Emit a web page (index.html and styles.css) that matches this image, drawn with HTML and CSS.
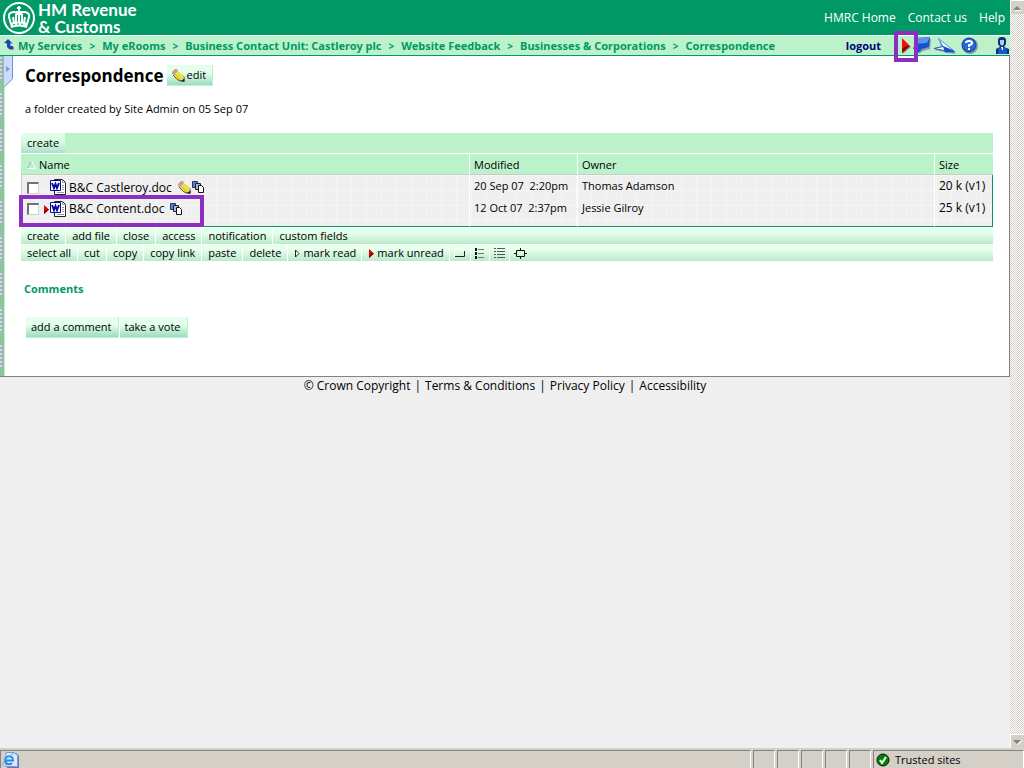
FILE: index.html
```html
<!DOCTYPE html>
<html lang="en">
<head>
    <meta charset="UTF-8">
    <meta name="viewport" content="width=device-width, initial-scale=1.0">
    <title>Correspondence</title>
    <link rel="stylesheet" href="styles.css">
</head>
<body>
    <!-- Shared icons -->
    <svg class="sprite" aria-hidden="true">
        <symbol id="pencil" viewBox="0 0 13 13">
            <path d="M5 2L13 8V13H8L2 8Z" fill="#777" opacity=".6"/>
            <path d="M1 4L4 1L11 6L12 12L6 11L1 6Z" fill="#ece04a"/>
            <path d="M1 6L6 11L12 12" fill="none" stroke="#6a6214"/>
            <path d="M0 3L3 0H5L6 2L2 6L0 5Z" fill="#c99aa0"/>
            <path d="M3 5L8 10" stroke="#c9bb22"/>
            <path d="M9 12.500L12.500 9V12.500Z" fill="#222"/>
        </symbol>
        <symbol id="versions" viewBox="0 0 12 12">
            <path d="M.5 .5H5.500V6.500H.5Z" fill="#5c83cc" stroke="#223660"/>
            <path d="M3.500 2.500H8.500V8.500H3.500Z" fill="#9cbbe9" stroke="#222"/>
            <path d="M6.500 4.500H9.500L11.500 6.500V11.500H6.500Z" fill="#fff" stroke="#111"/>
        </symbol>
        <symbol id="word" viewBox="0 0 17 17">
            <path d="M4.500 .5H12.500L15.500 3.500V15.500H4.500Z" fill="#fff" stroke="#222"/>
            <path d="M12.500 .5V3.500H15.500M12 6.500H14M12 8.500H14M7 13.500H14M12 10.500H14" fill="none" stroke="#999"/>
            <path d="M.5 1.500H10.500V11.500H.5Z" fill="#fff" stroke="#0a0a9c"/>
            <path d="M2 4L4 9L5.500 5L7 9L9 4" fill="none" stroke="#0a0a9c" stroke-width="2"/>
        </symbol>
        <symbol id="flag" viewBox="0 0 5 9">
            <path d="M0 0L5 4.500L0 9Z" fill="#e00000"/>
            <path d="M0 9L5 4.500H3L0 7Z" fill="#700"/>
        </symbol>
    </svg>

    <div class="window">
        <div class="page">
            <header class="banner">
                <a href="#" class="logo">
                    <svg width="34" height="34" viewBox="0 0 34 34">
                        <circle cx="17" cy="17" r="15" fill="none" stroke="#fff" stroke-width="2"/>
                        <path d="M9 23L7 16C6 11 14 9 16 14M25 23L27 16C28 11 20 9 18 14M12 22L11 16M22 22L23 16M17 12V22M14 13V22M20 13V22" fill="none" stroke="#fff" stroke-width="2"/>
                        <path d="M15 7H19M17 5V12M14 11H20" stroke="#fff" stroke-width="2"/>
                        <path d="M8 22Q17 19 26 22L25 27Q17 24 9 27Z" fill="#fff"/>
                        <path d="M11 24Q17 22 23 24" fill="none" stroke="#009966" stroke-dasharray="2 2"/>
                    </svg>
                    <span class="logo-text"><span>HM Revenue</span><span>&amp; Customs</span></span>
                </a>
                <nav class="banner-links">
                    <a href="#">HMRC Home</a>
                    <a href="#">Contact us</a>
                    <a href="#">Help</a>
                </nav>
            </header>

            <nav class="crumbs">
                <a href="#" aria-label="Up">
                    <svg width="10" height="14" viewBox="0 0 10 14"><path d="M5 1L9 5H7V8H10V11H6L5 9V5H1Z" fill="#8c9cb0"/><path d="M4 0L8 4H6V7H9V10H5L3 8V4H0Z" fill="#1c46b8"/></svg>
                </a>
                <ol>
                    <li><a href="#">My Services</a></li>
                    <li><a href="#">My eRooms</a></li>
                    <li><a href="#">Business Contact Unit: Castleroy plc</a></li>
                    <li><a href="#">Website Feedback</a></li>
                    <li><a href="#">Businesses &amp; Corporations</a></li>
                    <li><a href="#">Correspondence</a></li>
                </ol>
                <a href="#" class="logout">logout</a>
                <div class="tools">
                    <a href="#" class="tool-flag" aria-label="Unread">
                        <svg width="10" height="16" viewBox="0 0 10 16">
                            <path d="M2 2L10 9L2 16Z" fill="#7da58a"/>
                            <path d="M1 0L9 8L1 15Z" fill="#f01010"/>
                            <path d="M1 15L9 8H5L1 11Z" fill="#9c0000"/>
                        </svg>
                    </a>
                    <a href="#" class="tool-note" aria-label="Messages">
                        <svg width="18" height="17" viewBox="0 0 18 17">
                            <path d="M6 2H18L17 12L10 14L6 17V14H2Z" fill="#8c9cb0"/>
                            <path d="M4 1L17 0L16 10L9 12L5 16V12H0Z" fill="#1552cc"/>
                            <path d="M4 1L17 0L14 6L1 7Z" fill="#5c95ee"/>
                        </svg>
                    </a>
                    <a href="#" aria-label="Send">
                        <svg width="23" height="16" viewBox="0 0 23 16">
                            <path d="M6 2L23 14L21 16L2 12L8 9Z" fill="#8c9cb0"/>
                            <path d="M5.500 .5L21 13L10 8.500Z" fill="#fff" stroke="#4f86e0"/>
                            <path d="M1 10.500L10 8.500L21 13.500L11 12.500Z" fill="#fff" stroke="#2158c5"/>
                            <path d="M10 8.500L22 14L12 14.500Z" fill="#1c4cc4"/>
                        </svg>
                    </a>
                    <a href="#" aria-label="Help">
                        <svg width="17" height="17" viewBox="0 0 17 17">
                            <circle cx="9" cy="9" r="8" fill="#8c9cb0"/>
                            <circle cx="8" cy="8" r="7" fill="#2767d8" stroke="#123d9c"/>
                            <path d="M5 6Q5 4 8 4Q11 4 11 6Q11 8 8 8V10M8 11V13" fill="none" stroke="#fff" stroke-width="2"/>
                        </svg>
                    </a>
                    <a href="#" class="tool-user" aria-label="Members">
                        <svg width="14" height="17" viewBox="0 0 14 17">
                            <path d="M3 3Q3 0 7 0Q11 0 11 3V7L9 10L14 12V17H1V12L5 10L3 7Z" fill="#122d78"/>
                            <path d="M5 3H9V7L7 9L5 7Z" fill="#a9cdf5"/>
                            <path d="M5 10L7 13L9 10L12 12V17H3V12Z" fill="#1c55cc"/>
                            <path d="M6 10H8V13H7Z" fill="#fff"/>
                        </svg>
                    </a>
                </div>
            </nav>

            <div class="content">
                <div class="rail">
                    <button class="rail-tab" aria-label="Show sidebar">
                        <svg width="9" height="32" viewBox="0 0 9 32">
                            <path d="M0 0H8.500V23L0 31Z" fill="#ccdcff"/>
                            <path d="M8.500 0V23L0 31" fill="none" stroke="#6f93d2"/>
                            <path d="M2 10L6 13L2 16Z" fill="#7c9be0"/>
                        </svg>
                    </button>
                </div>
                <main>
                    <div class="heading">
                        <h1>Correspondence</h1>
                        <button class="btn"><svg width="13" height="13"><use href="#pencil"/></svg>edit</button>
                    </div>
                    <p class="about">a folder created by Site Admin on 05 Sep 07</p>

                    <div class="create-bar"><button>create</button></div>
                    <table class="files">
                        <colgroup>
                            <col>
                            <col class="col-modified">
                            <col class="col-owner">
                            <col class="col-size">
                        </colgroup>
                        <thead>
                            <tr>
                                <th class="sorted"><svg width="9" height="9" viewBox="0 0 9 9"><path d="M.5 8.500L4.500 .5" stroke="#9ab9a4"/><path d="M4.500 .5L8.500 8.500H.5" fill="none" stroke="#fff"/></svg>Name</th>
                                <th>Modified</th>
                                <th>Owner</th>
                                <th>Size</th>
                            </tr>
                        </thead>
                        <tbody>
                            <tr>
                                <td>
                                    <div class="file">
                                        <input type="checkbox" aria-label="Select B&amp;C Castleroy.doc">
                                        <span class="mark"></span>
                                        <svg width="17" height="17"><use href="#word"/></svg>
                                        <a href="#">B&amp;C Castleroy.doc</a>
                                        <span class="file-icons"><svg width="13" height="13"><use href="#pencil"/></svg><svg width="12" height="12"><use href="#versions"/></svg></span>
                                    </div>
                                </td>
                                <td class="meta">20 Sep 07&nbsp; 2:20pm</td>
                                <td class="meta">Thomas Adamson</td>
                                <td>20 k (v1)</td>
                            </tr>
                            <tr>
                                <td>
                                    <div class="file marked">
                                        <input type="checkbox" aria-label="Select B&amp;C Content.doc">
                                        <span class="mark"><svg width="5" height="9"><use href="#flag"/></svg></span>
                                        <svg width="17" height="17"><use href="#word"/></svg>
                                        <a href="#">B&amp;C Content.doc</a>
                                        <span class="file-icons"><svg width="12" height="12"><use href="#versions"/></svg></span>
                                    </div>
                                </td>
                                <td class="meta">12 Oct 07&nbsp; 2:37pm</td>
                                <td class="meta">Jessie Gilroy</td>
                                <td>25 k (v1)</td>
                            </tr>
                        </tbody>
                    </table>

                    <div class="toolbar">
                        <button>create</button>
                        <button>add file</button>
                        <button>close</button>
                        <button>access</button>
                        <button>notification</button>
                        <button>custom fields</button>
                    </div>
                    <div class="toolbar">
                        <button>select all</button>
                        <button>cut</button>
                        <button>copy</button>
                        <button>copy link</button>
                        <button>paste</button>
                        <button>delete</button>
                        <button class="with-flag"><svg width="5" height="9" viewBox="0 0 5 9"><path d="M.5 1L4 4.500L.5 8Z" fill="#fff" stroke="#222"/></svg>mark read</button>
                        <button class="with-flag"><svg width="5" height="9"><use href="#flag"/></svg>mark unread</button>
                        <button class="icon" aria-label="Icon view"><svg width="12" height="10" viewBox="0 0 12 10"><path d="M.5 9V2L2 .5H4L5.500 2H10" fill="none" stroke="#fff"/><path d="M1 8.500H10.500V3" fill="none" stroke="#222"/></svg></button>
                        <button class="icon" aria-label="List view"><svg width="10" height="11" viewBox="0 0 10 11"><path d="M0 1.500H2M0 5.500H2M0 9.500H2" stroke="#111" stroke-width="3"/><path d="M3 1.500H9M3 5.500H9M3 9.500H9" stroke="#777"/></svg></button>
                        <button class="icon" aria-label="Detail view"><svg width="11" height="11" viewBox="0 0 11 11"><path d="M0 .5H11M0 3.500H11M0 6.500H11M0 9.500H11" stroke="#555" stroke-dasharray="2 1 8"/></svg></button>
                        <button class="icon" aria-label="Box view"><svg width="13" height="11" viewBox="0 0 13 11"><path d="M2.500 2.500H10.500V8.500H2.500ZM0 5.500H2M11 5.500H13M6.500 0V2M6.500 9V11" fill="none" stroke="#111"/></svg></button>
                    </div>

                    <h2>Comments</h2>
                    <div class="actions">
                        <button class="btn">add a comment</button>
                        <button class="btn">take a vote</button>
                    </div>
                </main>
            </div>

            <footer>
                <span>&copy; Crown Copyright</span>
                <a href="#">Terms &amp; Conditions</a>
                <a href="#">Privacy Policy</a>
                <a href="#">Accessibility</a>
            </footer>
        </div>

        <div class="scrollbar">
            <button aria-label="Scroll up"><svg width="9" height="6" viewBox="0 0 9 6"><path d="M1 6H9L8 5H2Z" fill="#fff"/><path d="M0 5L4 1L8 5Z" fill="#848284"/></svg></button>
            <button aria-label="Scroll down"><svg width="9" height="6" viewBox="0 0 9 6"><path d="M5 6L9 2V1L4 5Z" fill="#fff"/><path d="M0 1H8L4 5Z" fill="#848284"/></svg></button>
        </div>

        <div class="statusbar">
            <div class="cell wide">
                <svg width="17" height="16" viewBox="0 0 17 16">
                    <path d="M5 2L6 1H14L17 4V16H5Z" fill="#66779c"/>
                    <path d="M4 .5H12L15.500 3.500V14.500H4Z" fill="#dde8ff" stroke="#7e9ad8"/>
                    <path d="M11 7.500A4 4 0 1 0 10 11" fill="none" stroke="#218be0" stroke-width="2"/>
                    <path d="M3 8.500H12" stroke="#218be0" stroke-width="2"/>
                    <path d="M1 14Q-1 11 5 6T12 2" fill="none" stroke="#5bb6ef"/>
                </svg>
            </div>
            <div class="cell"></div>
            <div class="cell"></div>
            <div class="cell"></div>
            <div class="cell"></div>
            <div class="cell"></div>
            <div class="cell zone">
                <svg width="14" height="14" viewBox="0 0 14 14"><circle cx="7" cy="7" r="6" fill="#008400" stroke="#111"/><path d="M4 7L6 10L10 4" fill="none" stroke="#fff" stroke-width="2"/></svg>
                Trusted sites
            </div>
        </div>
    </div>
</body>
</html>
```

FILE: styles.css
```css
*,
*::before,
*::after {
    box-sizing: border-box;
}

body {
    margin: 0;
    font-family: "Open Sans", "Noto Sans", sans-serif;
    font-size: 11px;
    line-height: 16px;
    color: #000;
    background-color: #efefef;
}

a {
    color: inherit;
    text-decoration: none;
}

svg {
    display: block;
    flex: none;
}

button {
    font: inherit;
    color: inherit;
    padding: 0;
    border: none;
    background: none;
    cursor: pointer;
}

.sprite {
    position: absolute;
    width: 0;
    height: 0;
}

.window {
    display: grid;
    grid-template-columns: 1fr 14px;
    grid-template-rows: 1fr 20px;
    height: 100vh;
}

.page {
    overflow: hidden;
}

/* Banner */
.banner {
    display: flex;
    justify-content: space-between;
    align-items: center;
    height: 35px;
    padding: 0 5px 0 2px;
    background-color: #009966;
    color: #fff;
}

.logo {
    display: flex;
    align-items: center;
    gap: 2px;
}

.logo-text {
    display: flex;
    flex-direction: column;
    font-family: Lato, sans-serif;
    font-size: 17px;
    font-weight: bold;
    line-height: 17px;
}

.banner-links {
    display: flex;
    gap: 12px;
    font-size: 12px;
}

/* Breadcrumbs */
.crumbs {
    display: flex;
    align-items: center;
    height: 21px;
    padding: 0 1px 0 4px;
    border-top: 1px solid #fff;
    border-bottom: 1px solid #009966;
    background-color: #bcf2c9;
    color: #009966;
    font-weight: bold;
}

.crumbs ol {
    display: flex;
    flex: 1;
    margin: 0;
    padding: 0 0 0 4px;
    list-style: none;
    font-family: "Noto Sans", sans-serif;
    white-space: nowrap;
}

.crumbs li + li::before {
    content: ">";
    padding: 0 7px;
    font-size: 10px;
}

.logout {
    margin-right: 16px;
    color: #000080;
}

.tools {
    display: flex;
    align-items: center;
    gap: 5px;
}

.tool-flag {
    position: relative;
    padding: 0 2px 0 4px;
}

.tool-flag::after {
    content: "";
    position: absolute;
    top: -7px;
    left: -3px;
    width: 24px;
    height: 31px;
    border: 4px solid #8a2fc0;
    z-index: 1;
}

.tool-note {
    margin: 0 -3px 0 -5px;
}

.tool-user {
    margin-left: 12px;
}

/* Content */
.content {
    display: flex;
    border-right: 1px solid #848284;
    border-bottom: 1px solid #848284;
    background-color: #fff;
}

.rail {
    position: relative;
    flex: none;
    width: 5px;
    border-right: 1px solid #bcf2c9;
    background:
        linear-gradient(transparent 24px, #90c49c 24px) 0 0 / 4px 36px,
        radial-gradient(circle at 1px 2px, #d4dae8 1px, #7f8aa0 2px, #90c49c 2px) 0 0 / 4px 4px;
}

.rail-tab {
    position: absolute;
    top: 0;
    left: 4px;
}

main {
    flex: 1;
    padding: 9px 16px 38px;
}

.heading {
    display: flex;
    align-items: center;
    gap: 3px;
    padding-left: 4px;
}

h1 {
    margin: 0;
    font-size: 17px;
    line-height: 21px;
}

.btn {
    display: flex;
    align-items: center;
    gap: 2px;
    height: 21px;
    padding: 0 6px 0 5px;
    border-right: 1px solid #bcf2c9;
    border-bottom: 1px solid #bcf2c9;
    background: linear-gradient(#e4ffec 40%, #9cdcc0);
}

.about {
    margin: 15px 4px 16px;
}

.create-bar {
    display: flex;
    height: 20px;
    background-color: #bcf2c9;
}

.create-bar button {
    padding: 0 6px;
    background: linear-gradient(#e4ffec, #d4fae0 50%, #acdfcc);
}

/* File table */
.files {
    width: 100%;
    border-collapse: separate;
    border-spacing: 0;
    table-layout: fixed;
    margin-top: 1px;
}

.col-modified {
    width: 108px;
}

.col-owner {
    width: 357px;
}

.col-size {
    width: 59px;
}

.files th {
    height: 21px;
    padding: 2px 4px 0;
    border-bottom: 1px solid #c6cec6;
    background-color: #bcf2c9;
    font-weight: normal;
    text-align: left;
}

.files th + th,
.files td + td {
    border-left: 1px solid #fff;
}

.files th.sorted {
    padding-left: 6px;
}

.sorted svg {
    display: inline-block;
    margin-right: 3px;
}

.files tbody {
    background-color: #efefef;
    background-image: linear-gradient(#f5f5f5 1px, transparent 1px), linear-gradient(90deg, #f5f5f5 1px, transparent 1px);
    background-size: 15px 15px;
}

.files td {
    height: 22px;
    padding: 0 4px;
    font-size: 12px;
    vertical-align: middle;
    white-space: nowrap;
}

.files td.meta {
    font-size: 11px;
}

.files tr:last-child td {
    height: 30px;
    padding-bottom: 8px;
    border-bottom: 1px solid #009966;
}

.files td:first-child {
    padding-top: 3px;
    padding-left: 5px;
    border-left: 1px solid #ccc;
}

.files td:last-child {
    border-right: 1px solid #009966;
}

.file {
    display: flex;
    align-items: center;
    width: max-content;
}

.file input {
    appearance: none;
    width: 12px;
    height: 12px;
    margin: 0;
    border: 1px solid #d4d0c8;
    border-top: 2px solid #747274;
    border-left: 2px solid #747274;
    background-color: #fff;
}

.file input:checked {
    background-color: #009966;
}

.mark {
    width: 11px;
    padding: 0 1px 0 5px;
}

.file a {
    margin: 0 6px 0 2px;
}

.file-icons {
    display: flex;
    gap: 1px;
}

.marked {
    position: relative;
}

.marked::after {
    content: "";
    position: absolute;
    top: -6px;
    left: -8px;
    right: -22px;
    bottom: -9px;
    border: 4px solid #8a2fc0;
    pointer-events: none;
}

/* Toolbars */
.toolbar {
    display: flex;
    height: 16px;
    margin-top: 1px;
    background: linear-gradient(#e4ffec 30%, #bce9ca);
}

.toolbar button {
    display: flex;
    align-items: center;
    padding: 0 6px;
}

.toolbar button + button {
    border-left: 1px solid #fff;
}

.toolbar .with-flag {
    gap: 3px;
    padding: 0 5px 0 7px;
}

.toolbar .icon {
    padding: 0 4px;
}

h2 {
    margin: 20px 3px;
    color: #009966;
    font-size: 11px;
    line-height: 16px;
}

.actions {
    display: flex;
    gap: 1px;
    padding-left: 5px;
}

footer {
    display: flex;
    justify-content: center;
    padding-top: 1px;
    font-size: 12px;
}

footer a::before {
    content: "|";
    padding: 0 4px;
}

/* Browser frame */
.scrollbar {
    display: flex;
    flex-direction: column;
    justify-content: space-between;
    background: repeating-conic-gradient(#fff 0 25%, #d4d0c8 0 50%) 0 0 / 2px 2px;
}

.scrollbar button {
    display: flex;
    align-items: center;
    justify-content: center;
    height: 14px;
    border-left: 1px solid #fff;
    border-top: 1px solid #fff;
    background-color: #d4d0c8;
}

.statusbar {
    grid-column: 1 / -1;
    display: flex;
    gap: 2px;
    padding-top: 2px;
    background-color: #d4d0c8;
}

.cell {
    flex: none;
    display: flex;
    align-items: center;
    width: 22px;
    border-top: 1px solid #848284;
    border-left: 1px solid #848284;
    border-right: 1px solid #fff;
}

.wide {
    flex: 1;
    padding-left: 1px;
}

.zone {
    width: 151px;
    gap: 5px;
    padding-left: 2px;
}
```
